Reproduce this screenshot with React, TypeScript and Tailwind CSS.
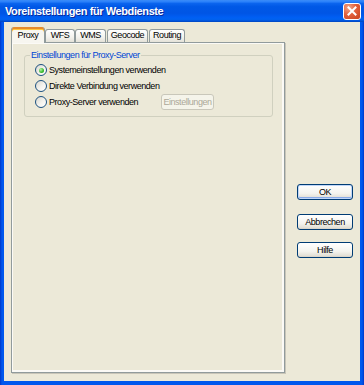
import React from "react";

const ui = "font-['Liberation_Sans',Arial,sans-serif]";
const txt = "text-[9px] tracking-[-0.45px]";

const tabs = [
  { label: "Proxy", w: "w-[34px]", active: true },
  { label: "WFS", w: "w-[30px]" },
  { label: "WMS", w: "w-[31px]" },
  { label: "Geocode", w: "w-[41px] ml-[1px]" },
  { label: "Routing", w: "w-[36px] ml-[1px]" },
];

const options = ["Systemeinstellungen verwenden", "Direkte Verbindung verwenden", "Proxy-Server verwenden"];

const Radio = ({ checked }: { checked?: boolean }) => (
  <span className="w-[12px] h-[12px] shrink-0 rounded-full border border-[#1c5180] bg-[linear-gradient(135deg,#d8d7cf_0%,#f4f3ee_55%,#ffffff_100%)] flex items-center justify-center">
    {checked && (
      <span className="w-[5px] h-[5px] rounded-full bg-[radial-gradient(circle_at_35%_35%,#b4f5a8_0%,#3cbd32_55%,#188a12_100%)]" />
    )}
  </span>
);

const XpButton = ({ label, primary }: { label: string; primary?: boolean }) => (
  <button
    className={
      "w-[56px] h-[16px] rounded-[3px] border border-[#003c74] bg-[linear-gradient(180deg,#ffffff_0%,#f4f3ee_60%,#e3e0d6_90%,#d6d0c5_100%)] leading-none text-black flex items-center justify-center " +
      txt +
      (primary ? " shadow-[inset_0_0_0_1px_#c0d6f8,inset_0_-1px_0_1px_#8aabe8]" : "")
    }
  >
    {label}
  </button>
);

export default function App() {
  return (
    <div className={"w-[364px] h-[385px] flex flex-col bg-[linear-gradient(90deg,#0037c8_0px,#0058ee_2px,#0058ee_calc(100%-2px),#0037c8_100%)] overflow-hidden " + ui}>
      {/* title bar */}
      <div className="h-[22px] shrink-0 flex items-center pl-[5px] pr-[3px] bg-[linear-gradient(180deg,#3b8cf8_0%,#2a80fa_8%,#0b64ee_16%,#0058e6_30%,#0055e5_60%,#005ef3_78%,#0062f0_88%,#0050d6_96%,#0043b8_100%)]">
        <span className="text-white font-bold text-[11px] leading-none tracking-[-0.4px] [text-shadow:1px_1px_0_#0a2a9c]">
          Voreinstellungen für Webdienste
        </span>
        <button className="ml-auto w-[18px] h-[17px] rounded-[3px] border border-white bg-[radial-gradient(circle_at_30%_25%,#f2a88c_0%,#e2603c_45%,#c8411c_100%)] flex items-center justify-center">
          <svg width="10" height="10" viewBox="0 0 10 10">
            <path d="M1.5 1.5 L8.5 8.5 M8.5 1.5 L1.5 8.5" stroke="#fff" strokeWidth="2" strokeLinecap="square" />
          </svg>
        </button>
      </div>

      {/* dialog body */}
      <div className="flex-1 mx-[4px] mb-[4px] bg-[#ece9d8] flex pt-[5px] pl-[7px]">
        <div className="w-[274px] h-[346px] flex flex-col">
          <div className="h-[15px] flex items-end">
            {tabs.map((t) =>
              t.active ? (
                <div
                  key={t.label}
                  className={t.w + " h-[16px] -mb-px relative z-10 rounded-t-[3px] border-x border-[#919b9c] bg-[#f7f6f0] shadow-[inset_0_2px_0_#e68b2c,inset_0_3px_0_#ffc73c] flex items-center justify-center pt-[1px] text-black " + txt}
                >
                  {t.label}
                </div>
              ) : (
                <div
                  key={t.label}
                  className={t.w + " h-[13px] rounded-t-[3px] border border-b-0 border-[#919b9c] bg-[linear-gradient(180deg,#ffffff_0%,#f3f2ed_60%,#e4e2d8_100%)] flex items-center justify-center text-black " + txt}
                >
                  {t.label}
                </div>
              )
            )}
          </div>

          <div className="flex-1 border border-[#919b9c] bg-[#ece9d8] shadow-[inset_1px_1px_0_#fbfaf6,inset_-2px_-2px_0_#fbfaf6,1px_1px_0_#c8c5b8] pt-[6px] pl-[12px] pr-[11px]">
            <fieldset className="border border-[#d0d0bf] rounded-[3px] pb-[6px]">
              <legend className={"ml-[5px] px-[1px] leading-[12px] text-[#0046d5] " + txt}>
                Einstellungen für Proxy-Server
              </legend>
              <div className="pl-[10px] pt-[1px] flex flex-col">
                {options.map((o, i) => (
                  <div key={o} className="h-[16px] flex items-center">
                    <div className="w-[126px] flex items-center gap-[2px]">
                      <Radio checked={i === 0} />
                      <span className={"leading-none text-black whitespace-nowrap " + txt}>{o}</span>
                    </div>
                    {i === 2 && (
                      <button className={"w-[53px] h-[16px] rounded-[3px] border border-[#c9c7ba] bg-[#f5f4ea] leading-none text-[#aca899] flex items-center justify-center " + txt}>
                        Einstellungen
                      </button>
                    )}
                  </div>
                ))}
              </div>
            </fieldset>
          </div>
        </div>

        <div className="ml-[12px] pt-[157px] flex flex-col gap-[14px]">
          <XpButton label="OK" primary />
          <div className="flex flex-col gap-[12px]">
            <XpButton label="Abbrechen" />
            <XpButton label="Hilfe" />
          </div>
        </div>
      </div>
    </div>
  );
}
